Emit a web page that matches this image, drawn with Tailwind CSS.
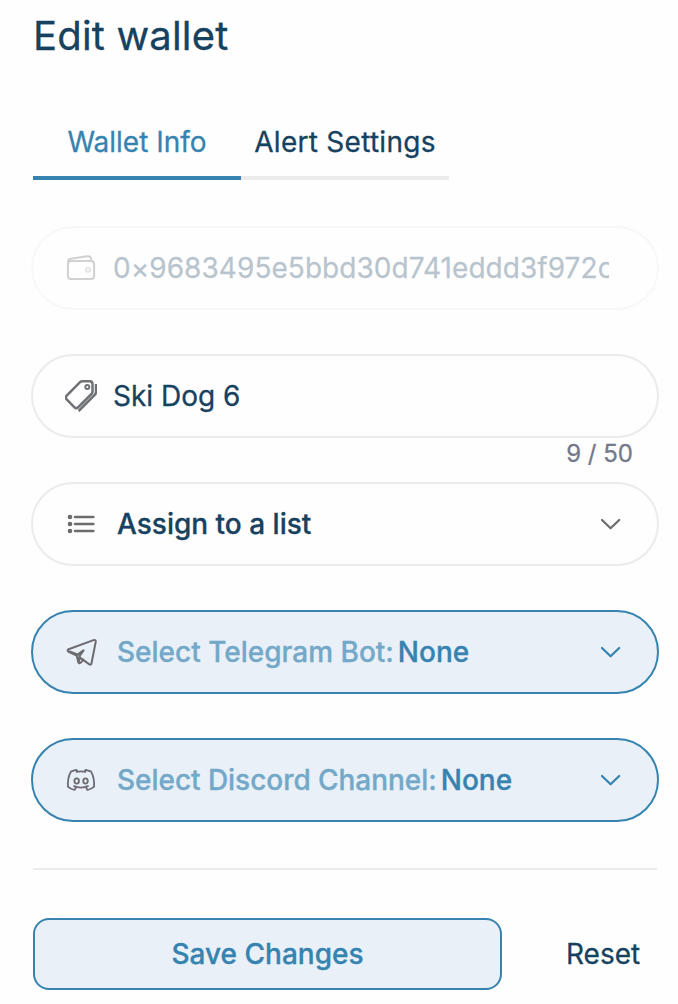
<!DOCTYPE html>
<html lang="en">
<head>
<meta charset="utf-8">
<title>Edit wallet</title>
<script src="https://cdn.jsdelivr.net/npm/@tailwindcss/browser@4"></script>
</head>
<body class="bg-[#fefefe] font-['Inter',sans-serif] text-[28px] leading-[34px] text-[#17425f] [-webkit-text-stroke:0.3px]">
<main class="flex h-[1004px] w-[678px] flex-col overflow-hidden pl-[31px] pr-[19px]">
  <h1 class="mt-[11px] pl-0.5 text-[40px] leading-[50px] tracking-[0.17px]">Edit wallet</h1>
  <nav class="mt-[45px] flex pl-0.5">
    <a class="h-[74px] w-[208px] whitespace-nowrap border-b-4 border-[#3783b0] pt-[19px] text-center text-[#3783b0]">Wallet Info</a>
    <a class="h-[74px] w-[208px] whitespace-nowrap border-b-4 border-[#ebebeb] pt-[19px] text-center tracking-[0.27px]">Alert Settings</a>
  </nav>

  <div class="mt-[46px] flex h-[84px] shrink-0 items-center rounded-full border-2 border-[#ebebeb] pl-8 pr-12 opacity-30">
    <svg class="h-8 w-8 shrink-0" viewBox="0 0 32 32" fill="none" stroke="#6b6b70" stroke-width="2">
      <rect x="2.900" y="8.900" width="26.200" height="18.200" rx="3"/>
      <path d="M3 11.5V9.500Q3 7.200 5.500 6.700L22.500 4.200Q25.500 3.800 25.900 6.500L26.100 8.800"/>
      <circle cx="23" cy="17.900" r="2" stroke-width="1.400" opacity=".75"/>
    </svg>
    <span class="ml-4 w-[496px] overflow-hidden whitespace-nowrap tracking-[0.05px]">0×9683495e5bbd30d741eddd3f972c</span>
  </div>

  <div class="mt-11 flex h-[84px] shrink-0 items-center rounded-full border-2 border-[#ebebeb] pl-8 pr-12">
    <svg class="h-8 w-8 shrink-0" viewBox="0 0 32 32" fill="none" stroke="#6f7175">
      <path d="M17.500 1.300H24.800Q27.500 1.300 27.500 4.200V11.500Q27.500 13 26.500 14L13 27.300Q11.200 29 9.500 27.300L1.700 19.500Q0 17.500 1.700 15.500L14.800 2.300Q16 1.300 17.500 1.300Z" stroke-width="2.500"/>
      <circle cx="22.300" cy="7.100" r="2" stroke-width="2"/>
      <path d="M31 4V11.500Q31 13.700 29.500 15.200L13.600 31" stroke-width="2.500"/>
    </svg>
    <span class="ml-4">Ski Dog 6</span>
  </div>
  <p class="h-11 shrink-0 pr-[26px] text-right text-2xl leading-8 text-[#74798c]">9 / 50</p>

  <div class="flex h-[84px] shrink-0 items-center justify-between rounded-full border-2 border-[#ebebeb] pl-8 pr-9">
    <div class="flex items-center gap-5 font-medium">
      <svg class="h-8 w-8" viewBox="0 0 32 32" fill="#6b6b70" stroke="#6b6b70">
        <path d="M9.900 9H28.500M9.900 16H28.500M9.900 23H28.500" stroke-width="2.300" stroke-linecap="round"/>
        <g stroke="none"><circle cx="5" cy="9" r="2.300"/><circle cx="5" cy="16" r="2.300"/><circle cx="5" cy="23" r="2.300"/></g>
      </svg>
      <span>Assign to a list</span>
    </div>
    <svg class="h-5 w-5" viewBox="0 0 20 20" fill="none" stroke="#6b6b70" stroke-width="2.200" stroke-linecap="round" stroke-linejoin="round"><path d="M1 6L9.600 14.300L18.200 6"/></svg>
  </div>

  <div class="mt-11 flex h-[84px] shrink-0 items-center justify-between rounded-full border-2 border-[#3783b0] bg-[#e9f0f7] pl-8 pr-9">
    <div class="flex items-center font-medium">
      <svg class="mr-5 h-8 w-8 overflow-visible" viewBox="0 0 32 32" fill="none" stroke="#6b6b70" stroke-width="2" stroke-linecap="round" stroke-linejoin="round">
        <path d="M3.600 13.200L28.500 4.100Q31.200 3.300 30.700 6L26.500 27.200Q26 29.500 24 28.100L18.200 23.900L15.800 26.600Q13.900 28.300 13.200 25.700L11.700 19.700L3.700 15.900Q1.600 14.400 3.600 13.200Z"/>
        <path d="M11.700 19.300L18.500 14.400L14.800 19.700L13.600 26L14.100 21.300L18.200 23.900M4.700 15.600L11.700 18.200" stroke-width="2.200"/>
      </svg>
      <span class="text-[#73a8c8]">Select Telegram Bot:</span><span class="ml-1 text-[#3783b0]">None</span>
    </div>
    <svg class="h-5 w-5" viewBox="0 0 20 20" fill="none" stroke="#3783b0" stroke-width="2.200" stroke-linecap="round" stroke-linejoin="round"><path d="M1 6L9.600 14.300L18.200 6"/></svg>
  </div>

  <div class="mt-11 flex h-[84px] shrink-0 items-center justify-between rounded-full border-2 border-[#3783b0] bg-[#e9f0f7] pl-8 pr-9">
    <div class="flex items-center font-medium">
      <svg class="mr-5 h-8 w-8" viewBox="0 0 32 32" fill="none" stroke="#6b6b70" stroke-width="1.800" stroke-linecap="round" stroke-linejoin="round">
        <path d="M12.300 7.900L11.500 5.800Q8.400 6.300 5.900 7.600Q2.500 13.600 2.900 22.600Q5.500 25 9.500 26L11 23.500M19.700 7.900L20.500 5.800Q23.600 6.300 26.100 7.600Q29.500 13.600 29.100 22.600Q26.500 25 22.500 26L21 23.500M11.500 7.800Q16 7 20.500 7.800M9 22.200Q16 25 23 22.200"/>
        <ellipse cx="11.700" cy="17" rx="2.300" ry="2.600"/><ellipse cx="20.500" cy="17" rx="2.300" ry="2.600"/>
      </svg>
      <span class="tracking-[-0.04px] text-[#73a8c8]">Select Discord Channel:</span><span class="ml-1 text-[#3783b0]">None</span>
    </div>
    <svg class="h-5 w-5" viewBox="0 0 20 20" fill="none" stroke="#3783b0" stroke-width="2.200" stroke-linecap="round" stroke-linejoin="round"><path d="M1 6L9.600 14.300L18.200 6"/></svg>
  </div>

  <hr class="ml-0.5 mr-0.5 mt-[46px] border-t-2 border-[#ebebeb]">

  <div class="mt-12 flex h-[72px] shrink-0 items-center pl-0.5">
    <button class="h-full w-[469px] rounded-2xl border-2 border-[#3783b0] bg-[#e9f0f7] font-medium text-[#3783b0]">Save Changes</button>
    <button class="ml-16">Reset</button>
  </div>
</main>
</body>
</html>
